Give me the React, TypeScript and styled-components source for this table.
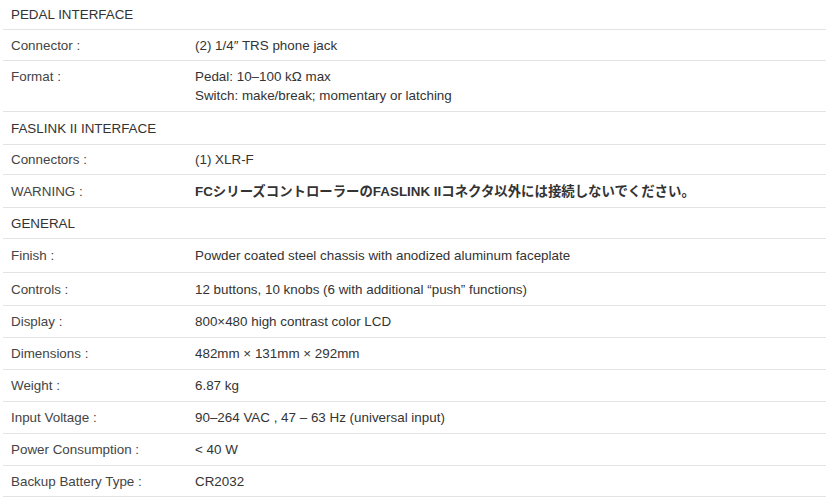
import React from "react";
import styled, { createGlobalStyle } from "styled-components";

const Global = createGlobalStyle`
  html, body { margin: 0; padding: 0; background: #ffffff; }
  body { font-family: "Liberation Sans", Arial, "Noto Sans CJK JP", sans-serif; }
`;

const Table = styled.div`
  margin-left: 3px;
  width: 823px;
  display: flex;
  flex-direction: column;
`;

const SectionRow = styled.div<{ $h?: number }>`
  height: ${(p) => p.$h ?? 32}px;
  display: flex;
  align-items: center;
  padding-left: 8px;
  border-bottom: 1px solid #e3e3e3;
  font-size: 13.4px;
  color: #333333;
`;

const Row = styled.div<{ $h?: number; $multi?: boolean }>`
  min-height: ${(p) => p.$h ?? 31}px;
  display: grid;
  grid-template-columns: 184px 1fr;
  align-items: ${(p) => (p.$multi ? "start" : "center")};
  padding: ${(p) => (p.$multi ? "6px 0 6px 8px" : "0 0 0 8px")};
  border-bottom: 1px solid #e3e3e3;
  font-size: 13.4px;
  line-height: 19px;
`;

const Label = styled.div`
  color: #444444;
`;

const Value = styled.div<{ $bold?: boolean }>`
  color: #333333;
  font-weight: ${(p) => (p.$bold ? 700 : 400)};
  font-family: ${(p) =>
    p.$bold
      ? '"Liberation Sans", Arial, "Noto Sans CJK JP", sans-serif'
      : '"Liberation Sans", Arial, sans-serif'};
`;

type Item = { label: string; value: React.ReactNode; bold?: boolean; h?: number; multi?: boolean };

const Section = ({ title, items, h }: { title: string; items: Item[]; h?: number }) => (
  <>
    <SectionRow $h={h}>{title}</SectionRow>
    {items.map((it) => (
      <Row key={it.label} $h={it.h} $multi={it.multi}>
        <Label>{it.label} :</Label>
        <Value $bold={it.bold}>{it.value}</Value>
      </Row>
    ))}
  </>
);

export default function App() {
  return (
    <>
      <Global />
      <Table>
        <Section
          title="PEDAL INTERFACE"
          h={29}
          items={[
            { label: "Connector", value: "(2) 1/4\u2033 TRS phone jack", h: 30 },
            {
              label: "Format",
              h: 38,
              multi: true,
              value: (
                <>
                  Pedal: 10–100 kΩ max
                  <br />
                  Switch: make/break; momentary or latching
                </>
              ),
            },
          ]}
        />
        <Section
          title="FASLINK II INTERFACE"
          items={[
            { label: "Connectors", value: "(1) XLR-F", h: 29 },
            {
              label: "WARNING",
              bold: true,
              h: 32,
              value: "FCシリーズコントローラーのFASLINK IIコネクタ以外には接続しないでください。",
            },
          ]}
        />
        <Section
          title="GENERAL"
          h={30}
          items={[
            { label: "Finish", value: "Powder coated steel chassis with anodized aluminum faceplate", h: 33 },
            { label: "Controls", value: "12 buttons, 10 knobs (6 with additional \u201Cpush\u201D functions)", h: 32 },
            { label: "Display", value: "800×480 high contrast color LCD" },
            { label: "Dimensions", value: "482mm × 131mm × 292mm" },
            { label: "Weight", value: "6.87 kg" },
            { label: "Input Voltage", value: "90–264 VAC , 47 – 63 Hz (universal input)" },
            { label: "Power Consumption", value: "< 40 W" },
            { label: "Backup Battery Type", value: "CR2032", h: 30 },
          ]}
        />
      </Table>
    </>
  );
}
